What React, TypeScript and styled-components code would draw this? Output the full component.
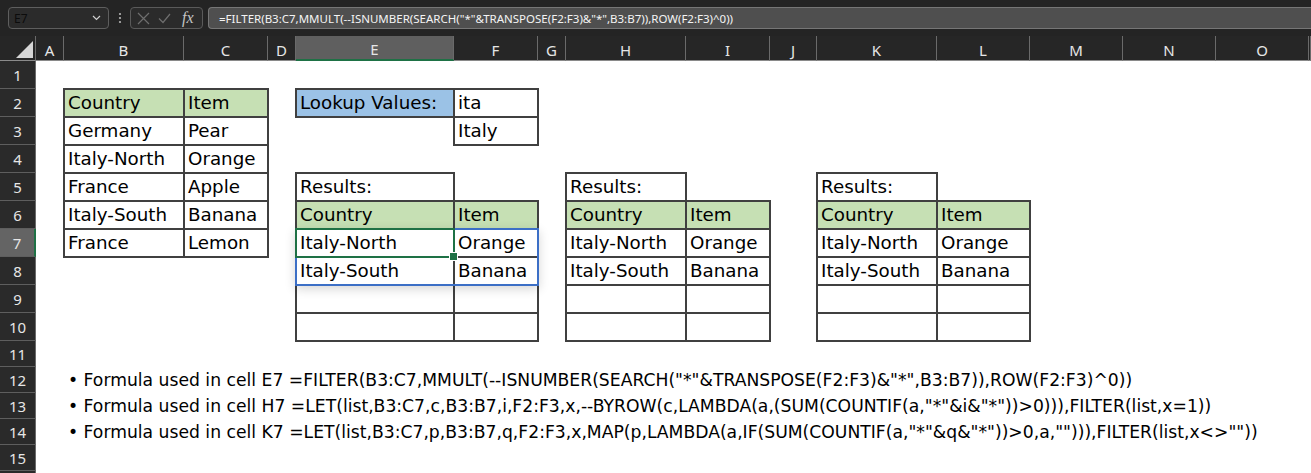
import styled, { createGlobalStyle } from "styled-components";

const GREEN = "#c6e0b4";
const BLUE = "#9bc2e6";
const FORMULA = '=FILTER(B3:C7,MMULT(--ISNUMBER(SEARCH("*"&TRANSPOSE(F2:F3)&"*",B3:B7)),ROW(F2:F3)^0))';

const COLUMNS = [
  { name: "A", width: 28 },
  { name: "B", width: 120 },
  { name: "C", width: 84 },
  { name: "D", width: 28 },
  { name: "E", width: 158 },
  { name: "F", width: 84 },
  { name: "G", width: 28 },
  { name: "H", width: 120 },
  { name: "I", width: 84 },
  { name: "J", width: 47 },
  { name: "K", width: 120 },
  { name: "L", width: 93 },
  { name: "M", width: 93 },
  { name: "N", width: 93 },
  { name: "O", width: 93 },
];
const ROW_HEIGHTS = [...Array(10).fill(28), ...Array(6).fill(26)];
const VISIBLE_ROWS = 15; // row 16 is only a sliver at the bottom edge

// grid column of a sheet column letter (column 1 is the row header)
const col = (letter: string) => COLUMNS.findIndex((c) => c.name === letter) + 2;

interface CellData {
  col: string;
  row: number;
  text?: string;
  fill?: string;
  boxed?: boolean;
}

const resultTable = (c1: string, c2: string): CellData[] => [
  { col: c1, row: 5, text: "Results:", boxed: true },
  { col: c1, row: 6, text: "Country", fill: GREEN, boxed: true },
  { col: c2, row: 6, text: "Item", fill: GREEN, boxed: true },
  { col: c1, row: 7, text: "Italy-North", boxed: true },
  { col: c2, row: 7, text: "Orange", boxed: true },
  { col: c1, row: 8, text: "Italy-South", boxed: true },
  { col: c2, row: 8, text: "Banana", boxed: true },
  { col: c1, row: 9, boxed: true },
  { col: c2, row: 9, boxed: true },
  { col: c1, row: 10, boxed: true },
  { col: c2, row: 10, boxed: true },
];

const sourceRows = [
  ["Germany", "Pear"],
  ["Italy-North", "Orange"],
  ["France", "Apple"],
  ["Italy-South", "Banana"],
  ["France", "Lemon"],
];

const CELLS: CellData[] = [
  { col: "B", row: 2, text: "Country", fill: GREEN, boxed: true },
  { col: "C", row: 2, text: "Item", fill: GREEN, boxed: true },
  ...sourceRows.flatMap(([country, item], i) => [
    { col: "B", row: i + 3, text: country, boxed: true },
    { col: "C", row: i + 3, text: item, boxed: true },
  ]),
  { col: "E", row: 2, text: "Lookup Values:", fill: BLUE, boxed: true },
  { col: "F", row: 2, text: "ita", boxed: true },
  { col: "F", row: 3, text: "Italy", boxed: true },
  ...resultTable("E", "F"),
  ...resultTable("H", "I"),
  ...resultTable("K", "L"),
];

const NOTES = [
  { row: 12, text: "Formula used in cell E7 " + FORMULA },
  { row: 13, text: 'Formula used in cell H7 =LET(list,B3:C7,c,B3:B7,i,F2:F3,x,--BYROW(c,LAMBDA(a,(SUM(COUNTIF(a,"*"&i&"*"))>0))),FILTER(list,x=1))' },
  { row: 14, text: 'Formula used in cell K7 =LET(list,B3:C7,p,B3:B7,q,F2:F3,x,MAP(p,LAMBDA(a,IF(SUM(COUNTIF(a,"*"&q&"*"))>0,a,""))),FILTER(list,x<>""))' },
];

const App = () => {
  return (
    <Window>
      <GlobalStyle />
      <Toolbar>
        <NameBox>
          <span>E7</span>
          <svg width="9" height="6" viewBox="0 0 9 6">
            <path d="M1 1l3.5 3.5L8 1" fill="none" stroke="#d0d0d0" strokeWidth="1.2" />
          </svg>
        </NameBox>
        <Dots>
          <svg width="4" height="12" viewBox="0 0 4 12">
            <circle cx="2" cy="2" r="1.1" fill="#b5b5b5" />
            <circle cx="2" cy="6" r="1.1" fill="#b5b5b5" />
            <circle cx="2" cy="10" r="1.1" fill="#b5b5b5" />
          </svg>
        </Dots>
        <FxBox>
          <svg width="13" height="13" viewBox="0 0 13 13">
            <path d="M1 1l11 11M12 1L1 12" stroke="#6e6e6e" strokeWidth="1.2" />
          </svg>
          <svg width="13" height="11" viewBox="0 0 13 11">
            <path d="M1 5.5l4 4L12 1" fill="none" stroke="#6e6e6e" strokeWidth="1.2" />
          </svg>
          <FxLabel>fx</FxLabel>
        </FxBox>
        <FormulaInput>{FORMULA}</FormulaInput>
      </Toolbar>

      <Sheet>
        <Corner>
          <CornerTriangle />
        </Corner>
        {COLUMNS.map((c, i) => (
          <ColHead key={c.name} $col={i + 2} $active={c.name === "E"}>
            {c.name}
          </ColHead>
        ))}
        <ColHead $col={COLUMNS.length + 2} />
        {ROW_HEIGHTS.map((_, i) => (
          <RowHead key={"row" + i} $row={i + 2} $active={i + 1 === 7}>
            {i < VISIBLE_ROWS && i + 1}
          </RowHead>
        ))}

        {CELLS.map((c) => (
          <Cell key={c.col + c.row} $col={col(c.col)} $row={c.row + 1} $fill={c.fill} $boxed={c.boxed}>
            {c.text}
          </Cell>
        ))}

        {NOTES.map((n) => (
          <Note key={n.row} $row={n.row + 1}>
            {"\u2022 " + n.text}
          </Note>
        ))}

        <SpillRange />
        <ActiveCell />
      </Sheet>
    </Window>
  );
};

export default App;

const GlobalStyle = createGlobalStyle`
  html, body {
    margin: 0;
    padding: 0;
    background: #262626;
  }
  * {
    box-sizing: border-box;
  }
`;

const Window = styled.div`
  width: 1311px;
  height: 473px;
  overflow: hidden;
  display: flex;
  flex-direction: column;
  background: #262626;
  font-family: "DejaVu Sans", sans-serif;
`;

const Toolbar = styled.div`
  height: 36px;
  flex-shrink: 0;
  display: flex;
  align-items: flex-start;
  padding-top: 7px;
  background: #242424;
`;

const NameBox = styled.div`
  margin-left: 8px;
  width: 101px;
  height: 22px;
  border: 1px solid #5e5e5e;
  border-radius: 4px;
  background: #2b2b2b;
  display: flex;
  align-items: center;
  justify-content: space-between;
  padding: 0 7px 0 5px;
  font: 12px "Noto Sans", sans-serif;
  color: #0c0c0c;
`;

const Dots = styled.div`
  width: 21px;
  height: 22px;
  display: flex;
  align-items: center;
  justify-content: center;
`;

const FxBox = styled.div`
  width: 73px;
  height: 22px;
  border: 1px solid #5a5a5a;
  border-radius: 4px;
  background: #2b2b2b;
  display: flex;
  align-items: center;
  gap: 8px;
  padding-left: 6px;
`;

const FxLabel = styled.span`
  margin-left: 3px;
  font: italic 16px "Liberation Serif", serif;
  color: #c4c4c4;
  line-height: 1;
`;

const FormulaInput = styled.div`
  flex: 1;
  margin-left: 5px;
  height: 22px;
  border: 1px solid #767676;
  border-right: none;
  border-radius: 4px 0 0 4px;
  background: #4f4f4f;
  color: #f4f4f4;
  font: 11.5px "Noto Sans", sans-serif;
  display: flex;
  align-items: center;
  padding-left: 10px;
  white-space: nowrap;
`;

const Sheet = styled.div`
  display: grid;
  grid-template-columns: 36px ${COLUMNS.map((c) => c.width + "px").join(" ")} 1fr;
  grid-template-rows: 25px ${ROW_HEIGHTS.map((h) => h + "px").join(" ")};
  background: #ffffff;
  color: #000;
`;

const Corner = styled.div`
  grid-column: 1;
  grid-row: 1;
  background: #262626;
  border-right: 1px solid #6a6a6a;
  border-bottom: 1px solid #8a8a8a;
  display: flex;
  align-items: flex-end;
  justify-content: flex-end;
  padding: 0 2px 2px 0;
`;

const CornerTriangle = styled.div`
  width: 17px;
  height: 17px;
  background: #d6d6d6;
  clip-path: polygon(100% 0, 100% 100%, 0 100%);
`;

const ColHead = styled.div<{ $col: number; $active?: boolean }>`
  grid-column: ${(p) => p.$col};
  grid-row: 1;
  display: flex;
  align-items: center;
  justify-content: center;
  padding-top: 3px;
  background: ${(p) => (p.$active ? "#5f5f5f" : "#262626")};
  border-right: 1px solid #6a6a6a;
  border-bottom: ${(p) => (p.$active ? "2px solid #1e7145" : "1px solid #8a8a8a")};
  color: #e6e6e6;
  font: 15px "Noto Sans", sans-serif;
`;

const RowHead = styled.div<{ $row: number; $active?: boolean }>`
  grid-column: 1;
  grid-row: ${(p) => p.$row};
  display: flex;
  align-items: center;
  justify-content: center;
  background: ${(p) => (p.$active ? "#646464" : "#2a2a2a")};
  border-bottom: 1px solid #5e5e5e;
  border-right: ${(p) => (p.$active ? "2px solid #1e7145" : "1px solid #6a6a6a")};
  color: #e6e6e6;
  font: 15px "Noto Sans", sans-serif;
`;

const Cell = styled.div<{ $col: number; $row: number; $fill?: string; $boxed?: boolean }>`
  grid-column: ${(p) => p.$col};
  grid-row: ${(p) => p.$row};
  margin: ${(p) => (p.$boxed ? "-1px" : "0")};
  border: ${(p) => (p.$boxed ? "2px solid #404040" : "none")};
  background: ${(p) => p.$fill ?? "transparent"};
  display: flex;
  align-items: center;
  padding: 0 3px;
  font-size: 18.3px;
  line-height: 22px;
  white-space: nowrap;
`;

const Note = styled.div<{ $row: number }>`
  grid-column: 3 / -1;
  grid-row: ${(p) => p.$row};
  display: flex;
  align-items: center;
  padding-left: 4px;
  font-size: 17.2px;
  line-height: 22px;
  white-space: nowrap;
`;

const SpillRange = styled.div`
  grid-column: ${col("E")} / span 2;
  grid-row: 8 / span 2;
  margin: -1px;
  border: 2px solid #3c6fc6;
  box-shadow: 0 3px 10px rgba(0, 0, 0, 0.16);
  pointer-events: none;
`;

const ActiveCell = styled.div`
  grid-column: ${col("E")};
  grid-row: 8;
  margin: -1px;
  border: 2px solid #1e7145;
  position: relative;
  pointer-events: none;
  &::after {
    content: "";
    position: absolute;
    right: -5px;
    bottom: -5px;
    width: 7px;
    height: 7px;
    background: #1e7145;
    border: 1px solid #fff;
  }
`;
